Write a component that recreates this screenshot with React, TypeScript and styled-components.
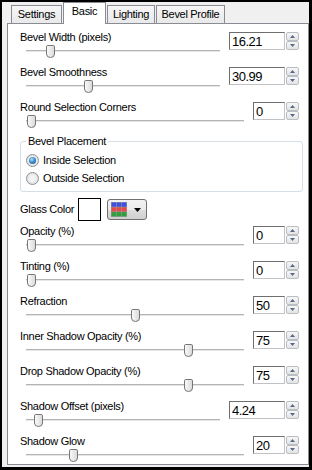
import React from 'react';
import styled, { createGlobalStyle, css } from 'styled-components';

const GlobalStyle = createGlobalStyle`
  html, body {
    margin: 0;
    padding: 0;
    background: #ffffff;
  }
  body {
    font-family: 'Liberation Sans', Arial, sans-serif;
    font-size: 11px;
    letter-spacing: -0.3px;
    color: #000;
  }
`;

type SliderRow = { label: string; value: string; pos: number; wide?: boolean };

const topRows: SliderRow[] = [
  { label: 'Bevel Width (pixels)', value: '16.21', pos: 0.103, wide: true },
  { label: 'Bevel Smoothness', value: '30.99', pos: 0.31, wide: true },
  { label: 'Round Selection Corners', value: '0', pos: 0 },
];

const bottomRows: SliderRow[] = [
  { label: 'Opacity (%)', value: '0', pos: 0 },
  { label: 'Tinting (%)', value: '0', pos: 0 },
  { label: 'Refraction', value: '50', pos: 0.5 },
  { label: 'Inner Shadow Opacity (%)', value: '75', pos: 0.755 },
  { label: 'Drop Shadow Opacity (%)', value: '75', pos: 0.755 },
  { label: 'Shadow Offset (pixels)', value: '4.24', pos: 0.038, wide: true },
  { label: 'Shadow Glow', value: '20', pos: 0.2 },
];

const tabs = [
  { name: 'Settings', width: 51 },
  { name: 'Basic', width: 43, active: true },
  { name: 'Lighting', width: 48 },
  { name: 'Bevel Profile', width: 69 },
];

const Frame = styled.div`
  width: 312px;
  height: 470px;
  box-sizing: border-box;
  border-style: solid;
  border-color: #000;
  border-width: 2px 3px 3px 2px;
  background: #f0f0f0;
  padding: 0 0 2px 5px;
  display: flex;
  flex-direction: column;
`;

const TabStrip = styled.div`
  height: 21px;
  display: flex;
  align-items: flex-end;
  padding-left: 4px;
`;

const Tab = styled.div<{ $active?: boolean; $w: number }>`
  box-sizing: border-box;
  width: ${(p) => p.$w}px;
  height: 18px;
  padding-top: 2px;
  line-height: 13px;
  text-align: center;
  white-space: nowrap;
  border: 1px solid #898c95;
  border-bottom: none;
  background: linear-gradient(#f6f6f6, #e9e9e9);
  & + & {
    margin-left: 1px;
  }
  ${(p) =>
    p.$active &&
    css`
      height: 22px;
      margin-bottom: -1px;
      position: relative;
      z-index: 1;
      background: #ffffff;
    `}
`;

const Panel = styled.div`
  flex: 1;
  border: 1px solid #898c95;
  background: #ffffff;
  overflow: hidden;
  padding: 8px 9px 0 12px;
`;

const Row = styled.div`
  height: 35px;
  display: flex;
  align-items: flex-start;
`;

const LeftCol = styled.div`
  flex: 1;
  min-width: 0;
  display: flex;
  flex-direction: column;
`;

const Label = styled.div`
  line-height: 13px;
  height: 13px;
  margin-top: -1px;
  white-space: nowrap;
`;

const Track = styled.div`
  position: relative;
  height: 14px;
  margin: 0 9px 0 6px;
  &::before {
    content: '';
    position: absolute;
    left: 0;
    right: 0;
    top: 6px;
    height: 1px;
    border-top: 1px solid #b4b4b4;
    background: #e6e6e6;
  }
`;

const Thumb = styled.svg`
  position: absolute;
  top: 1px;
  width: 9px;
  height: 13px;
`;

const Field = styled.div`
  display: flex;
  gap: 1px;
`;

const NumberBox = styled.input<{ $wide?: boolean }>`
  box-sizing: border-box;
  width: ${(p) => (p.$wide ? 56 : 32)}px;
  height: 18px;
  margin: 0;
  padding: 0 0 0 2px;
  border: 1px solid;
  border-color: #6f6f6f #bfc3c8 #bfc3c8 #6f6f6f;
  background: #fff;
  font-family: 'Liberation Sans', Arial, sans-serif;
  font-size: 13px;
  letter-spacing: -0.5px;
  color: #000;
  outline: none;
`;

const Spin = styled.div`
  width: 13px;
  height: 18px;
  display: flex;
  flex-direction: column;
`;

const SpinBtn = styled.div`
  flex: 1;
  box-sizing: border-box;
  border: 1px solid #b9bdc4;
  border-radius: 2px;
  background: linear-gradient(#f7f7f7, #e3e3e3);
  display: flex;
  align-items: center;
  justify-content: center;
`;

const Group = styled.fieldset`
  margin: -2px -4px 0 0;
  padding: 0 5px 4px;
  min-width: 0;
  border: 1px solid #d5dfe5;
  border-radius: 3px;
`;

const Legend = styled.legend`
  padding: 0 2px;
  line-height: 13px;
`;

const RadioRow = styled.div`
  height: 18px;
  display: flex;
  align-items: center;
  gap: 4px;
  &:first-of-type {
    margin-top: 3px;
  }
`;

const Radio = styled.span<{ $checked?: boolean }>`
  box-sizing: border-box;
  width: 13px;
  height: 13px;
  border-radius: 50%;
  border: 1px solid #8c8f94;
  background: radial-gradient(circle at 50% 50%, #f4f4f4 30%, #d6d6d6 100%);
  display: flex;
  align-items: center;
  justify-content: center;
  ${(p) =>
    p.$checked &&
    css`
      &::after {
        content: '';
        width: 7px;
        height: 7px;
        border-radius: 50%;
        background: radial-gradient(circle at 40% 35%, #b5e3fb 0%, #3c8fcf 45%, #164d80 100%);
      }
    `}
`;

const GlassRow = styled.div`
  display: flex;
  align-items: flex-start;
  height: 23px;
  margin: 6px 0 5px;
`;

const GlassLabel = styled.div`
  width: 58px;
  line-height: 13px;
  margin-top: 5px;
  white-space: nowrap;
`;

const Swatch = styled.div`
  box-sizing: border-box;
  width: 23px;
  height: 23px;
  border: 1px solid #000;
  background: #fff;
`;

const ColorButton = styled.div`
  box-sizing: border-box;
  width: 40px;
  height: 21px;
  margin: 1px 0 0 6px;
  padding-left: 3px;
  border: 1px solid #707070;
  border-radius: 3px;
  background: linear-gradient(#f2f2f2 0%, #ebebeb 50%, #dddddd 51%, #cfcfcf 100%);
  display: flex;
  align-items: center;
  gap: 7px;
`;

const paletteRows = ['#3f4fe0', '#e64b4b', '#2f9e3d'];

function Palette() {
  return (
    <svg width="16" height="15" viewBox="0 0 16 15">
      <rect x="0" y="0" width="16" height="15" fill="#9a9a9a" />
      {paletteRows.map((c, r) =>
        [0, 1, 2].map((i) => (
          <rect key={`${r}-${i}`} x={0.5 + i * 5.2} y={0.5 + r * 4.8} width={4.6} height={4.2} fill={c} />
        ))
      )}
    </svg>
  );
}

function Arrow({ up }: { up?: boolean }) {
  return (
    <svg width="5" height="3" viewBox="0 0 5 3">
      <path d={up ? 'M0 3 L2.5 0 L5 3Z' : 'M0 0 L5 0 L2.5 3Z'} fill="#55688e" />
    </svg>
  );
}

function NumberField({ value, wide }: { value: string; wide?: boolean }) {
  return (
    <Field>
      <NumberBox $wide={wide} value={value} readOnly />
      <Spin>
        <SpinBtn>
          <Arrow up />
        </SpinBtn>
        <SpinBtn>
          <Arrow />
        </SpinBtn>
      </Spin>
    </Field>
  );
}

function Slider({ row }: { row: SliderRow }) {
  return (
    <Row>
      <LeftCol>
        <Label>{row.label}</Label>
        <Track>
          <Thumb viewBox="0 0 9 13" style={{ left: `calc(1px + ${row.pos} * (100% - 10px))` }}>
            <defs>
              <linearGradient id="thumbFill" x1="0" y1="0" x2="1" y2="0">
                <stop offset="0" stopColor="#fbfbfb" />
                <stop offset="1" stopColor="#d9d9d9" />
              </linearGradient>
            </defs>
            <path
              d="M1.8 0.5 H7.2 Q8.5 0.5 8.5 1.8 V9 Q8.5 12.5 4.5 12.5 Q0.5 12.5 0.5 9 V1.8 Q0.5 0.5 1.8 0.5 Z"
              fill="url(#thumbFill)"
              stroke="#767676"
            />
          </Thumb>
        </Track>
      </LeftCol>
      <NumberField value={row.value} wide={row.wide} />
    </Row>
  );
}

export default function App() {
  return (
    <>
      <GlobalStyle />
      <Frame>
        <TabStrip>
          {tabs.map((t) => (
            <Tab key={t.name} $w={t.width} $active={t.active}>
              {t.name}
            </Tab>
          ))}
        </TabStrip>
        <Panel>
          {topRows.map((r) => (
            <Slider key={r.label} row={r} />
          ))}
          <Group>
            <Legend>Bevel Placement</Legend>
            <RadioRow>
              <Radio $checked />
              Inside Selection
            </RadioRow>
            <RadioRow>
              <Radio />
              Outside Selection
            </RadioRow>
          </Group>
          <GlassRow>
            <GlassLabel>Glass Color</GlassLabel>
            <Swatch />
            <ColorButton>
              <Palette />
              <svg width="7" height="4" viewBox="0 0 7 4">
                <path d="M0 0 H7 L3.5 4 Z" fill="#000" />
              </svg>
            </ColorButton>
          </GlassRow>
          {bottomRows.map((r) => (
            <Slider key={r.label} row={r} />
          ))}
        </Panel>
      </Frame>
    </>
  );
}
